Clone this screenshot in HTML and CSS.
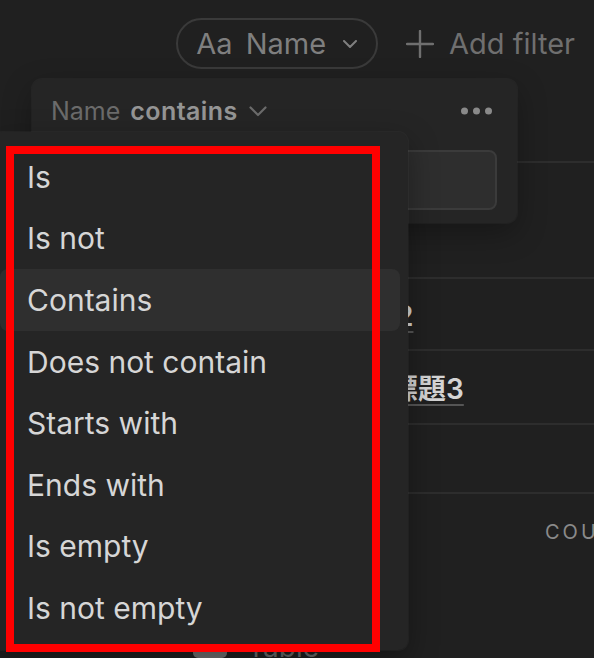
FILE: index.html
```html
<!DOCTYPE html>
<html lang="en">
<head>
<meta charset="utf-8">
<title>Filter</title>
<link rel="stylesheet" href="styles.css">
</head>
<body>
<div class="page">
  <div class="toolbar">
    <div class="pill">
      <span class="pill-icon">Aa</span>
      <span class="pill-label">Name</span>
      <svg class="pill-chev" width="14" height="8" viewBox="0 0 14 8"><path d="M1 1 L7 7 L13 1" fill="none" stroke="#7f7f7f" stroke-width="2" stroke-linecap="round" stroke-linejoin="round"/></svg>
    </div>
    <div class="add-filter">
      <svg class="plus" width="28" height="28" viewBox="0 0 28 28"><path d="M14 1 V27 M1 14 H27" fill="none" stroke="#6f6f6f" stroke-width="2.4" stroke-linecap="round"/></svg>
      <span>Add filter</span>
    </div>
  </div>

  <div class="table">
    <div class="row row-head"></div>
    <div class="row row-1"><span class="cell-title">標題1</span></div>
    <div class="row row-2"><span class="cell-title">標題2</span></div>
    <div class="row row-3"><span class="cell-title cell-title-long">標題標題3</span></div>
    <div class="row row-4"></div>
  </div>
  <div class="calc">Count</div>
  <div class="views">
    <span class="view-icon"></span>
    <span class="view-label">Table</span>
  </div>

  <div class="filter-card">
    <div class="card-head">
      <span class="card-name">Name</span>
      <span class="card-op">contains</span>
      <svg class="card-chev" width="18" height="11" viewBox="0 0 18 11"><path d="M1.5 1.5 L9 9 L16.5 1.5" fill="none" stroke="#6b6b6b" stroke-width="2.2" stroke-linecap="round" stroke-linejoin="round"/></svg>
      <svg class="card-dots" width="31" height="8" viewBox="0 0 31 8"><circle cx="3.5" cy="4" r="3.5" fill="#8a8a8a"/><circle cx="15.5" cy="4" r="3.5" fill="#8a8a8a"/><circle cx="27.5" cy="4" r="3.5" fill="#8a8a8a"/></svg>
    </div>
    <div class="card-input"></div>
  </div>

  <div class="menu">
    <div class="menu-item">Is</div>
    <div class="menu-item">Is not</div>
    <div class="menu-item active">Contains</div>
    <div class="menu-item">Does not contain</div>
    <div class="menu-item">Starts with</div>
    <div class="menu-item">Ends with</div>
    <div class="menu-item">Is empty</div>
    <div class="menu-item">Is not empty</div>
  </div>

  <div class="annotation"></div>
</div>
</body>
</html>
```

FILE: styles.css
```css
html, body {
  margin: 0;
  padding: 0;
}
body {
  background: #202020;
  font-family: Inter, "Noto Sans CJK TC", sans-serif;
  width: 594px;
  height: 658px;
  overflow: hidden;
}
.page {
  position: relative;
  width: 594px;
  height: 658px;
  overflow: hidden;
}

/* toolbar */
.toolbar {
  display: flex;
  justify-content: flex-end;
  align-items: center;
  gap: 28px;
  padding: 18px 19px 0 0;
  height: 51px;
}
.pill {
  display: flex;
  align-items: center;
  box-sizing: border-box;
  height: 51px;
  border: 2px solid #3a3a3a;
  border-radius: 26px;
  padding: 0 19px 0 18px;
  color: #7f7f7f;
  font-size: 29px;
  white-space: nowrap;
}
.pill-icon {
  margin-right: 13px;
}
.pill-label {
  margin-right: 17px;
}
.add-filter {
  display: flex;
  align-items: center;
  gap: 15px;
  color: #6f6f6f;
  font-size: 29px;
  white-space: nowrap;
}

/* background table */
.row {
  box-sizing: border-box;
  display: flex;
  align-items: center;
  border-bottom: 2px solid #2d2d2d;
}
.row-head { height: 94px; }
.row-1 { height: 116px; }
.row-2 { height: 72px; }
.row-3 { height: 74px; }
.row-4 { height: 69px; }
.cell-title {
  margin-left: 340px;
  font-size: 28px;
  font-weight: 600;
  color: #d4d4d4;
  text-decoration: underline;
  text-decoration-color: #555555;
  text-decoration-thickness: 2px;
  text-underline-offset: 5px;
  white-space: nowrap;
}
.cell-title-long {
  margin-left: 334px;
}
.calc {
  padding: 28px 0 0 545px;
  font-size: 20px;
  line-height: 20px;
  letter-spacing: 3px;
  text-transform: uppercase;
  color: #8a8a8a;
  white-space: nowrap;
}
.views {
  display: flex;
  align-items: center;
  gap: 20px;
  margin-top: 88px;
  padding-left: 193px;
  color: #6a6a6a;
  font-size: 28px;
}
.view-icon {
  width: 34px;
  height: 22px;
  border-radius: 5px;
  background: #707070;
}

/* filter card */
.filter-card {
  position: absolute;
  left: 32px;
  top: 79px;
  width: 485px;
  height: 144px;
  box-sizing: border-box;
  padding: 17px 20px 13px 19px;
  background: #252525;
  border-radius: 10px;
  box-shadow: 0 0 0 1px rgba(255, 255, 255, 0.03), 0 10px 30px rgba(0, 0, 0, 0.3);
}
.card-head {
  display: flex;
  align-items: center;
  height: 30px;
  font-size: 25px;
  white-space: nowrap;
}
.card-name {
  color: #6b6b6b;
  margin-right: 10px;
}
.card-op {
  color: #959595;
  font-weight: 600;
  letter-spacing: 0.4px;
  margin-right: 11px;
}
.card-dots {
  margin-left: auto;
  margin-right: 5px;
}
.card-input {
  margin-top: 24px;
  height: 60px;
  box-sizing: border-box;
  background: #2e2e2e;
  border: 2px solid #3b3b3b;
  border-radius: 8px;
}

/* dropdown menu */
.menu {
  position: absolute;
  left: -8px;
  top: 132px;
  width: 416px;
  height: 518px;
  box-sizing: border-box;
  padding: 14px 8px 11px;
  background: #252525;
  border-radius: 10px;
  box-shadow: 0 0 0 1px rgba(255, 255, 255, 0.03), 0 10px 30px rgba(0, 0, 0, 0.35);
}
.menu-item {
  display: flex;
  align-items: center;
  height: 61.6px;
  padding-left: 27px;
  border-radius: 8px;
  font-size: 30px;
  color: #d6d6d6;
  white-space: nowrap;
}
.menu-item.active {
  background: #2f2f2f;
}

/* red annotation frame */
.annotation {
  position: absolute;
  left: 6px;
  top: 146px;
  width: 374px;
  height: 506px;
  box-sizing: border-box;
  border: 8px solid #ff0000;
}
```
